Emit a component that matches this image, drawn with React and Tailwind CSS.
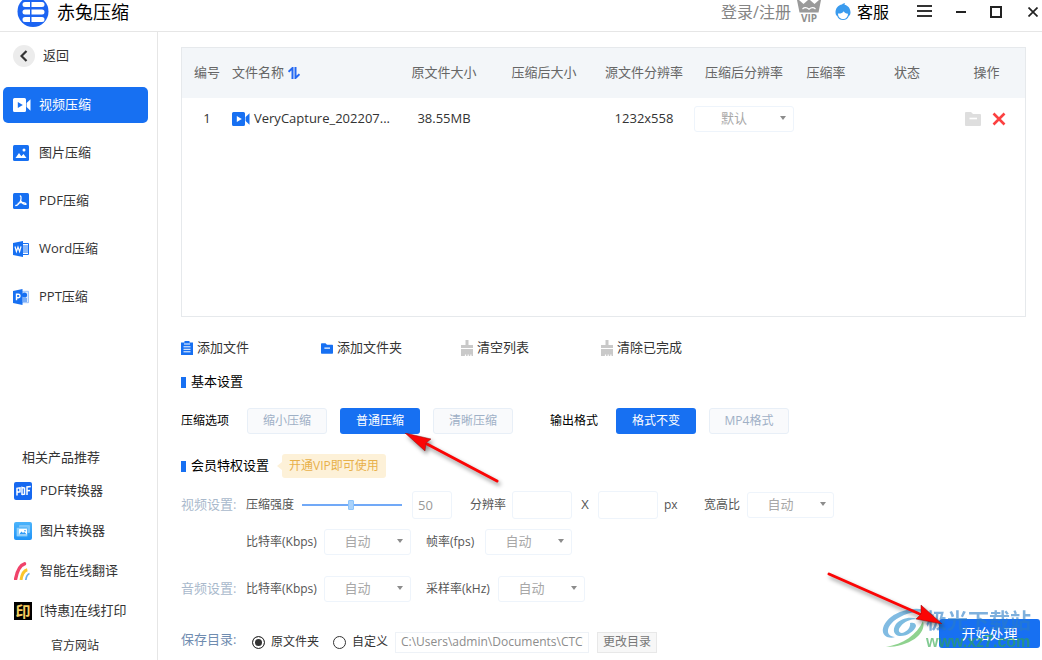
import React from "react";

const VideoIcon = ({ className, play }) => (
  <svg viewBox="0 0 18 14" className={className} fill="currentColor" aria-hidden="true">
    <path d="M1.500 0h10A1.500 1.500 0 0 1 13 1.500v11a1.500 1.500 0 0 1-1.500 1.500h-10A1.500 1.500 0 0 1 0 12.500v-11A1.500 1.500 0 0 1 1.500 0z" />
    <path d="M13.600 5 17.500 1.300v11.400L13.600 9z" />
    <path d="M4.800 4v6l5-3z" fill={play} />
  </svg>
);

const ImageIcon = () => (
  <svg viewBox="0 0 16 16" className="size-4" aria-hidden="true">
    <rect width="16" height="16" rx="1.500" fill="#1770f2" />
    <circle cx="11" cy="5" r="1.500" fill="#fff" />
    <path d="M2.500 13 6 8l2.300 3.200L10.500 9l3 4z" fill="#fff" />
  </svg>
);

const PdfIcon = () => (
  <svg viewBox="0 0 16 16" className="size-4" aria-hidden="true">
    <rect width="16" height="16" rx="1.500" fill="#1770f2" />
    <path
      d="M7.300 3c1.200.3.700 3 .4 4.500C6.800 9.600 4.500 12.300 2.800 12.500M5.200 10.300c1.800-.7 4.400-1 5.400-.6 1.400.3 2.600.8 2.400 1.600-1.700.6-5-1.600-5.400-4"
      fill="none"
      stroke="#fff"
      strokeWidth="1.300"
      strokeLinecap="round"
    />
  </svg>
);

const WordIcon = () => (
  <svg viewBox="0 0 17 16" className="h-4 w-[17px]" aria-hidden="true">
    <path d="M9.500 2.500h6v11h-6z" fill="#fff" stroke="#1770f2" strokeWidth="1" />
    <path d="M10 5h5M10 7h5M10 9h5M10 11h5" stroke="#1770f2" strokeWidth="1" />
    <path d="M0 2 10 0v16L0 14z" fill="#1770f2" />
    <path d="m2 5.500 1.400 5L5 6l1.600 4.500L8 5.300" fill="none" stroke="#fff" strokeWidth="1.200" />
  </svg>
);

const PptIcon = () => (
  <svg viewBox="0 0 17 16" className="h-4 w-[17px]" aria-hidden="true">
    <path d="M9 2.300h6.500v11.400H9z" fill="#dceafd" stroke="#8bb8f8" strokeWidth=".8" />
    <circle cx="11.500" cy="6" r="2.600" fill="#1770f2" />
    <path d="M10 10h4M10 12h4" stroke="#1770f2" strokeWidth="1" />
    <path d="M0 2 9.500 0v16L0 14z" fill="#1770f2" />
    <path d="M3.500 11.300V5.300h1.800a1.700 1.700 0 0 1 0 3.500H3.500" fill="none" stroke="#fff" strokeWidth="1.400" />
  </svg>
);

const PdfConvertIcon = () => (
  <svg viewBox="0 0 18 18" className="size-[18px]" aria-hidden="true">
    <rect width="18" height="18" rx="2" fill="#1668f0" />
    <path
      d="M3 13.500V6.300l3-.5v4l-3 .5M8 13V5.500l2.500.5v6.200L8 12.500M13 13V5l3.800-.6M13 8.800l3-.4"
      fill="none"
      stroke="#fff"
      strokeWidth="1.500"
    />
  </svg>
);

const PictureConvertIcon = () => (
  <svg viewBox="0 0 18 18" className="size-[18px]" aria-hidden="true">
    <defs>
      <linearGradient id="sky" x1="0" y1="0" x2="0" y2="1">
        <stop offset="0" stopColor="#4cb4fb" />
        <stop offset="1" stopColor="#1f93f7" />
      </linearGradient>
    </defs>
    <rect width="18" height="18" rx="2" fill="url(#sky)" />
    <rect x="5" y="3" width="11" height="8" rx="1" fill="#7cc6fb" />
    <rect x="2.500" y="5.500" width="11" height="9" rx="1" fill="#8fd0fc" stroke="#46acf9" strokeWidth=".6" />
    <rect x="5" y="7" width="8" height="6" rx=".5" fill="#fff" />
    <path d="m5 12.500 2.500-3L9 11l1.200-1 2.800 2.500z" fill="#2c9bf8" />
    <circle cx="11" cy="8.700" r=".8" fill="#2c9bf8" />
  </svg>
);

const RainbowIcon = () => (
  <svg viewBox="0 0 18 18" className="size-[18px]" fill="none" aria-hidden="true">
    <path d="M1.500 17.500C3 9 6.500 3 10.500 1.800" stroke="#f0436a" strokeWidth="3.400" strokeLinecap="round" />
    <path d="M7 18c.8-5.500 2.800-9.500 6.300-10.300" stroke="#fbc62b" strokeWidth="3" />
    <path d="M11.800 18c.4-3 1.600-5.800 3.700-6.500" stroke="#6aaee8" strokeWidth="1.800" />
  </svg>
);

const PrintIcon = () => (
  <span className="flex size-[18px] items-center justify-center overflow-hidden bg-black text-[15px] leading-none font-bold text-[#f6cf61]">
    印
  </span>
);

const BrushIcon = () => (
  <svg viewBox="0 0 12 16" className="h-4 w-3" fill="#c9c9c9" aria-hidden="true">
    <path d="M4.500 0h3v5H12v3H0V5h4.500z" />
    <path d="M0 9h12v7h-1.500v-1.500H9.300V16H7.800v-1.500H6.600V16H5.100v-1.500H3.900V16H0z" />
  </svg>
);

const ClipboardIcon = () => (
  <svg viewBox="0 0 12 14" className="h-3.5 w-3" aria-hidden="true">
    <path d="M0 1.500h12V14H0zM3.500 0h5v2h-5z" fill="#1770f2" />
    <path d="M3 3h6M2.500 5.800h7M2.500 8.300h7M2.500 10.800h7" stroke="#fff" strokeWidth="1" />
  </svg>
);

const FolderIcon = ({ className }) => (
  <svg viewBox="0 0 16 14" className={className} aria-hidden="true">
    <path d="M0 1a1 1 0 0 1 1-1h5l2 2h7a1 1 0 0 1 1 1v10a1 1 0 0 1-1 1H1a1 1 0 0 1-1-1z" fill="currentColor" />
    <path d="M4.500 6.500h7.500" stroke="#fff" strokeWidth="1.600" />
  </svg>
);

function AutoSelect({ className, label, value }) {
  return (
    <span className={`relative flex ${className}`}>
      <select
        aria-label={label}
        disabled
        className="h-[26px] w-full appearance-none rounded-[3px] border border-[#eef4fb] bg-white pr-5 text-center text-[13px] text-[#a8a8a8] opacity-100"
      >
        <option>{value}</option>
      </select>
      <svg viewBox="0 0 6 4" className="pointer-events-none absolute top-[10px] right-2 h-1 w-1.5" aria-hidden="true">
        <path d="M0 0h6L3 4z" fill="#8c8c8c" />
      </svg>
    </span>
  );
}

function SectionTitle({ children }) {
  return (
    <h2 className="flex items-center gap-[5px] text-[13px] text-black">
      <span className="h-[11px] w-[5px] bg-[#1770f2]" />
      {children}
    </h2>
  );
}

const optionClass =
  "h-[26px] w-20 rounded-[3px] border border-[#e8eff7] bg-[#f9fafc] text-[12px] text-[#9fb0c6]";
const activeClass = "h-[26px] w-20 rounded-[3px] bg-[#1770f2] text-[12px] text-white";

const navItems = [
  { text: "视频压缩", icon: <VideoIcon className="h-3.5 w-[18px]" play="#1770f2" />, active: true },
  { text: "图片压缩", icon: <ImageIcon /> },
  { text: "PDF压缩", icon: <PdfIcon /> },
  { text: "Word压缩", icon: <WordIcon /> },
  { text: "PPT压缩", icon: <PptIcon /> },
];

const products = [
  { text: "PDF转换器", icon: <PdfConvertIcon /> },
  { text: "图片转换器", icon: <PictureConvertIcon /> },
  { text: "智能在线翻译", icon: <RainbowIcon /> },
  { text: "[特惠]在线打印", icon: <PrintIcon /> },
];

const toolbar = [
  { text: "添加文件", icon: <ClipboardIcon /> },
  { text: "添加文件夹", icon: <FolderIcon className="h-[11px] w-3 text-[#1770f2]" /> },
  { text: "清空列表", icon: <BrushIcon /> },
  { text: "清除已完成", icon: <BrushIcon /> },
];

function Header() {
  return (
    <header className="flex h-8 items-center overflow-hidden border-b border-[#e6e6e6] pr-1 pb-2 pl-[17px]">
      <svg viewBox="0 0 32 32" className="size-8 shrink-0" aria-hidden="true">
        <circle cx="16" cy="15.500" r="15.500" fill="#1c64f2" />
        <g fill="#fff">
          <path d="M13 6v5H8a2.500 2.500 0 0 1 0-5zM14.500 6H25a2.500 2.500 0 0 1 0 5H14.500z" />
          <path d="M13 13.500v5H8a2.500 2.500 0 0 1 0-5zM14.500 13.500H25a2.500 2.500 0 0 1 0 5H14.500z" />
          <path d="M13 21v5H8a2.500 2.500 0 0 1 0-5zM14.500 21H25a2.500 2.500 0 0 1 0 5H14.500z" />
        </g>
      </svg>
      <h1 className="ml-2 text-[18px] leading-6 whitespace-nowrap text-black">赤兔压缩</h1>
      <div className="ml-auto flex items-center whitespace-nowrap">
        <button type="button" className="text-[16px] leading-6 text-[#858585]">
          登录/注册
        </button>
        <svg viewBox="0 0 24 24" className="ml-1.5 size-6" aria-label="VIP" role="img">
          <path d="M0 0h2l4.500 4L11 0h2l4.500 4L22 0h2l-2.500 12.500h-19z" fill="#9a9a9a" />
          <path d="M5.500 9c2-1.800 4-1.800 6.500.2C14.500 7.200 16.500 7.200 18.500 9" fill="none" stroke="#fff" strokeWidth="1.200" />
          <text x="12" y="22" textAnchor="middle" fontSize="10" fontWeight="700" fill="#8e8e8e">
            VIP
          </text>
        </svg>
        <button type="button" className="ml-3.5 flex items-center gap-1.5 text-[16px] leading-6 text-black">
          <svg viewBox="0 0 16 18" className="h-[18px] w-4" aria-hidden="true">
            <path d="M7 1.500C8.500 0 10 .3 10 .3L9.500 1.800C13 2.500 15.500 5.500 15.500 9.500c0 1.500-.6 3-1.800 3.700C13 15.500 11 17 8 17s-5-1.500-5.700-3.800C1.100 12.500.5 11 .5 9.500.5 5.500 3 2 7 1.500z" fill="#3a9bee" />
            <path d="M3 10.500c2.200.3 4.800-.5 5.800-2.300.6 1.400 2 2.300 4.200 2.500 0 3-2 5.300-5 5.300s-5-2.300-5-5.500z" fill="#fff" />
          </svg>
          客服
        </button>
        <button type="button" aria-label="菜单" className="ml-7">
          <svg viewBox="0 0 15 13" className="h-[13px] w-[15px]" stroke="#333" strokeWidth="2" aria-hidden="true">
            <path d="M0 1h15M0 6h15M0 11h15" />
          </svg>
        </button>
        <button type="button" aria-label="最小化" className="ml-6">
          <svg viewBox="0 0 10 12" className="h-3 w-[10px]" stroke="#222" strokeWidth="2" aria-hidden="true">
            <path d="M0 6h10" />
          </svg>
        </button>
        <button type="button" aria-label="最大化" className="ml-6">
          <svg viewBox="0 0 12 12" className="size-3" fill="none" stroke="#222" strokeWidth="2" aria-hidden="true">
            <path d="M1 1h10v10H1z" />
          </svg>
        </button>
        <button type="button" aria-label="关闭" className="ml-[26px]">
          <svg viewBox="0 0 10 10" className="size-[10px]" stroke="#222" strokeWidth="1.700" aria-hidden="true">
            <path d="m.5.5 9 9m0-9-9 9" />
          </svg>
        </button>
      </div>
    </header>
  );
}

function Sidebar() {
  return (
    <aside className="flex w-[158px] shrink-0 flex-col border-r border-[#e6e6e6] pt-3 pb-1 text-[13px] text-[#333]">
      <button type="button" className="ml-[13px] flex h-6 items-center gap-2 self-start">
        <span className="flex size-[22px] items-center justify-center rounded-full bg-[#ececec]">
          <svg viewBox="0 0 8 12" className="h-3 w-2" fill="none" stroke="#333" strokeWidth="2.200" aria-hidden="true">
            <path d="M6.500 1 1.500 6l5 5" />
          </svg>
        </span>
        返回
      </button>
      <nav className="mt-[19px] mr-[9px] ml-[3px] flex flex-col gap-3">
        {navItems.map((item) => (
          <button
            key={item.text}
            type="button"
            className={`flex h-9 items-center rounded-[5px] pl-2.5 ${item.active ? "bg-[#1770f2] text-white" : ""}`}
          >
            <span className="flex w-[26px]">{item.icon}</span>
            {item.text}
          </button>
        ))}
      </nav>
      <h2 className="mt-auto ml-[22px] leading-5">相关产品推荐</h2>
      <ul className="mt-1">
        {products.map((p) => (
          <li key={p.text}>
            <a href="#" className="ml-3.5 flex h-10 items-center gap-2">
              {p.icon}
              {p.text}
            </a>
          </li>
        ))}
      </ul>
      <a href="#" className="mt-[5px] ml-[51px] text-[12px] leading-5">
        官方网站
      </a>
    </aside>
  );
}

function FileTable() {
  const th = "p-0 font-normal";
  return (
    <div className="min-h-[270px] border border-[#e6e9ec]">
      <table className="w-full table-fixed text-[13px] text-[#333]">
        <colgroup>
          <col className="w-[50px]" />
          <col />
          <col className="w-[100px]" />
          <col className="w-[100px]" />
          <col className="w-[100px]" />
          <col className="w-[100px]" />
          <col className="w-16" />
          <col className="w-[98px]" />
          <col className="w-[69px]" />
        </colgroup>
        <thead className="bg-[#f3f6f9] text-[#666]">
          <tr className="h-[50px]">
            <th className={th}>编号</th>
            <th className={th}>
              <button type="button" className="flex items-center gap-1">
                文件名称
                <svg viewBox="0 0 12 12" className="size-3" fill="none" stroke="#2468f2" strokeWidth="2" aria-hidden="true">
                  <path d="M4.500 12V1L.5 4.800M7.500 0v11l4-3.800" />
                </svg>
              </button>
            </th>
            <th className={th}>原文件大小</th>
            <th className={th}>压缩后大小</th>
            <th className={th}>源文件分辨率</th>
            <th className={th}>压缩后分辨率</th>
            <th className={th}>压缩率</th>
            <th className={th}>状态</th>
            <th className="p-0 pr-2 font-normal">操作</th>
          </tr>
        </thead>
        <tbody>
          <tr className="h-[42px] text-center">
            <td>1</td>
            <td>
              <span className="flex items-center gap-1">
                <VideoIcon className="h-3.5 w-[18px] text-[#1770f2]" play="#fff" />
                VeryCapture_202207...
              </span>
            </td>
            <td>38.55MB</td>
            <td />
            <td>1232x558</td>
            <td>
              <AutoSelect className="w-[100px]" label="压缩后分辨率" value="默认" />
            </td>
            <td />
            <td />
            <td>
              <span className="flex items-center gap-[11px] pl-[9px]">
                <button type="button" aria-label="打开文件夹">
                  <FolderIcon className="h-3.5 w-4 text-[#dedede]" />
                </button>
                <button type="button" aria-label="删除">
                  <svg viewBox="0 0 14 14" className="size-3.5" stroke="#fb4040" strokeWidth="2.600" aria-hidden="true">
                    <path d="m1.500 1.500 11 11m0-11-11 11" />
                  </svg>
                </button>
              </span>
            </td>
          </tr>
        </tbody>
      </table>
    </div>
  );
}

const Arrow = ({ className, w, h, tail, head }) => (
  <svg
    viewBox={`0 0 ${w} ${h}`}
    className={`pointer-events-none absolute z-20 drop-shadow-[2px_3px_2px_rgba(0,0,0,0.45)] ${className}`}
    aria-hidden="true"
  >
    <path d={tail} stroke="#fb0505" strokeWidth="3" strokeLinecap="round" />
    <path d={head} fill="#fb0505" stroke="#8d1010" strokeWidth=".5" />
  </svg>
);

function Watermark() {
  return (
    <div className="pointer-events-none absolute -top-3 right-[11px] z-10 flex items-start opacity-60" aria-hidden="true">
      <svg viewBox="0 0 44 42" className="h-[42px] w-11 overflow-visible" aria-hidden="true">
        <path d="M47 5C38-1 20 2 9 10 0 17-2 27 5 30c3 1 6 1 8 0C5 29 4 23 9 17 16 9 31 3 47 5z" fill="#2f8fd0" />
        <path
          d="M35 12c-7-3-17 0-21 5-4 6-2 11 3 12 7 1 16-5 17-10 0-3-3-4-6-3 1 4-3 9-8 10-4 0-4-4-1-7 3-4 9-7 16-7z"
          fill="#2790cc"
        />
        <path d="M41 14c4 13-14 26-37 26 17-3 31-12 37-26z" fill="#45b545" />
      </svg>
      <div className="pt-px whitespace-nowrap">
        <div className="text-[21px] leading-6 font-bold text-[#2a7cc7]">极光下载站</div>
        <div className="font-['Liberation_Sans',sans-serif] text-[16px] leading-5 font-bold text-[#2fa84b]">www.xz7.com</div>
      </div>
    </div>
  );
}

const inputClass = "h-7 rounded-[3px] border border-[#eef4fb] bg-white text-[13px] text-[#999]";

function Settings() {
  return (
    <>
      <section>
        <div className="mt-2.5 flex h-6 items-center">
          <SectionTitle>基本设置</SectionTitle>
        </div>
        <div className="mt-3.5 flex items-center text-[12px] text-black">
          <span className="w-[66px]">压缩选项</span>
          <button type="button" className={optionClass}>缩小压缩</button>
          <span className="relative ml-[13px] flex">
            <button type="button" className={activeClass}>普通压缩</button>
            <Arrow
              className="top-[25px] left-[65px] h-[50px] w-[94px]"
              w={94}
              h={50}
              tail="M22 11 92 48"
              head="M0 0 26 6 21 10 20 18z"
            />
          </span>
          <button type="button" className={`ml-[13px] ${optionClass}`}>清晰压缩</button>
          <span className="ml-[37px] w-[66px]">输出格式</span>
          <button type="button" className={activeClass}>格式不变</button>
          <button type="button" className={`ml-[13px] ${optionClass}`}>MP4格式</button>
        </div>
      </section>

      <section className="text-[12px] text-[#555]">
        <div className="mt-[19px] flex h-[26px] items-center">
          <SectionTitle>会员特权设置</SectionTitle>
          <svg viewBox="0 0 5 8" className="ml-2 h-2 w-[5px]" aria-hidden="true">
            <path d="M5 0v8L0 4z" fill="#fdf1d8" />
          </svg>
          <button type="button" className="h-6 rounded-[3px] bg-[#fdf1d8] px-[7px] text-[12px] text-[#e8b04a]">
            开通VIP即可使用
          </button>
        </div>

        <div className="mt-3 flex items-center">
          <span className="w-[65px] text-[13px] text-[#a9b9cc]">视频设置:</span>
          <label htmlFor="strength" className="w-14">压缩强度</label>
          <input
            id="strength"
            type="range"
            min="0"
            max="100"
            defaultValue="49"
            className="h-0.5 w-[100px] appearance-none bg-[#71a9f7] [&::-webkit-slider-thumb]:h-2.5 [&::-webkit-slider-thumb]:w-1.5 [&::-webkit-slider-thumb]:appearance-none [&::-webkit-slider-thumb]:rounded-[1px] [&::-webkit-slider-thumb]:border [&::-webkit-slider-thumb]:border-[#8cc4fb] [&::-webkit-slider-thumb]:bg-[#a9d2fb]"
          />
          <input aria-label="压缩强度数值" defaultValue="50" className={`ml-2.5 w-10 pl-[5px] ${inputClass}`} />
          <label htmlFor="res-w" className="ml-[18px] w-[42px]">分辨率</label>
          <input id="res-w" className={`w-[60px] ${inputClass}`} />
          <span className="w-[26px] text-center text-[13px]">X</span>
          <input aria-label="分辨率高度" className={`w-[60px] ${inputClass}`} />
          <span className="ml-1.5 w-10 text-[12px]">px</span>
          <span className="w-[43px]">宽高比</span>
          <AutoSelect className="w-[87px]" label="宽高比" value="自动" />
        </div>

        <div className="mt-2.5 flex items-center pl-[65px]">
          <span className="w-[78px]">比特率(Kbps)</span>
          <AutoSelect className="w-[87px]" label="视频比特率" value="自动" />
          <span className="ml-[15px] w-[59px]">帧率(fps)</span>
          <AutoSelect className="w-[87px]" label="帧率" value="自动" />
        </div>

        <div className="mt-[21px] flex items-center">
          <span className="w-[65px] text-[13px] text-[#a9b9cc]">音频设置:</span>
          <span className="w-[78px]">比特率(Kbps)</span>
          <AutoSelect className="w-[87px]" label="音频比特率" value="自动" />
          <span className="ml-[15px] w-[72px]">采样率(kHz)</span>
          <AutoSelect className="w-[87px]" label="采样率" value="自动" />
        </div>
      </section>
    </>
  );
}

const radioClass =
  "size-[13px] appearance-none rounded-full border border-[#333] bg-white checked:bg-[#333] checked:shadow-[inset_0_0_0_2px_#fff]";

function Footer() {
  return (
    <footer className="relative mt-[17px] flex items-start pr-0.5 text-[12px] text-[#333]">
      <div className="mt-3 flex h-[22px] items-center">
        <span className="w-[71px] pb-1 text-[13px] text-[#6f8cb0]">保存目录:</span>
        <label className="flex w-[81px] items-center gap-1.5">
          <input type="radio" name="dir" defaultChecked className={radioClass} />
          原文件夹
        </label>
        <label className="flex w-[62px] items-center gap-1.5">
          <input type="radio" name="dir" className={radioClass} />
          自定义
        </label>
        <div className="flex h-[21px] w-[194px] border border-[#eef2f7] px-[5px]">
          <input
            aria-label="保存目录"
            defaultValue="C:\Users\admin\Documents\CTCompress"
            className="w-full min-w-0 text-[12px] text-[#8c8c8c]"
          />
        </div>
        <button type="button" className="ml-2 h-[21px] w-[60px] border border-[#e8e8e8] bg-[#f7f7f7] text-[12px] text-[#777]">
          更改目录
        </button>
      </div>
      <button type="button" className="ml-auto h-[29px] w-[101px] rounded-[3px] bg-[#1770f2] text-[14px] text-white">
        开始处理
      </button>
      <Watermark />
      <Arrow
        className="-top-[47px] right-[100px] h-[52px] w-[115px]"
        w={115}
        h={52}
        tail="M2 2 95 43"
        head="M115 52 89 47 94 42 94 33z"
      />
    </footer>
  );
}

export default function App() {
  return (
    <div className="flex min-h-screen flex-col overflow-hidden bg-white font-['Open_Sans','Noto_Sans_CJK_SC',sans-serif]">
      <Header />
      <div className="flex flex-1">
        <Sidebar />
        <main className="flex min-w-0 flex-1 flex-col pt-[15px] pl-[23px]">
          <div className="pr-4">
            <FileTable />
            <div className="mt-[19px] flex h-6 text-[13px] text-[#333]">
              {toolbar.map((t) => (
                <div key={t.text} className="flex w-[140px] items-center">
                  <button type="button" className="flex items-center gap-1">
                    {t.icon}
                    {t.text}
                  </button>
                </div>
              ))}
            </div>
            <Settings />
          </div>
          <Footer />
        </main>
      </div>
    </div>
  );
}
